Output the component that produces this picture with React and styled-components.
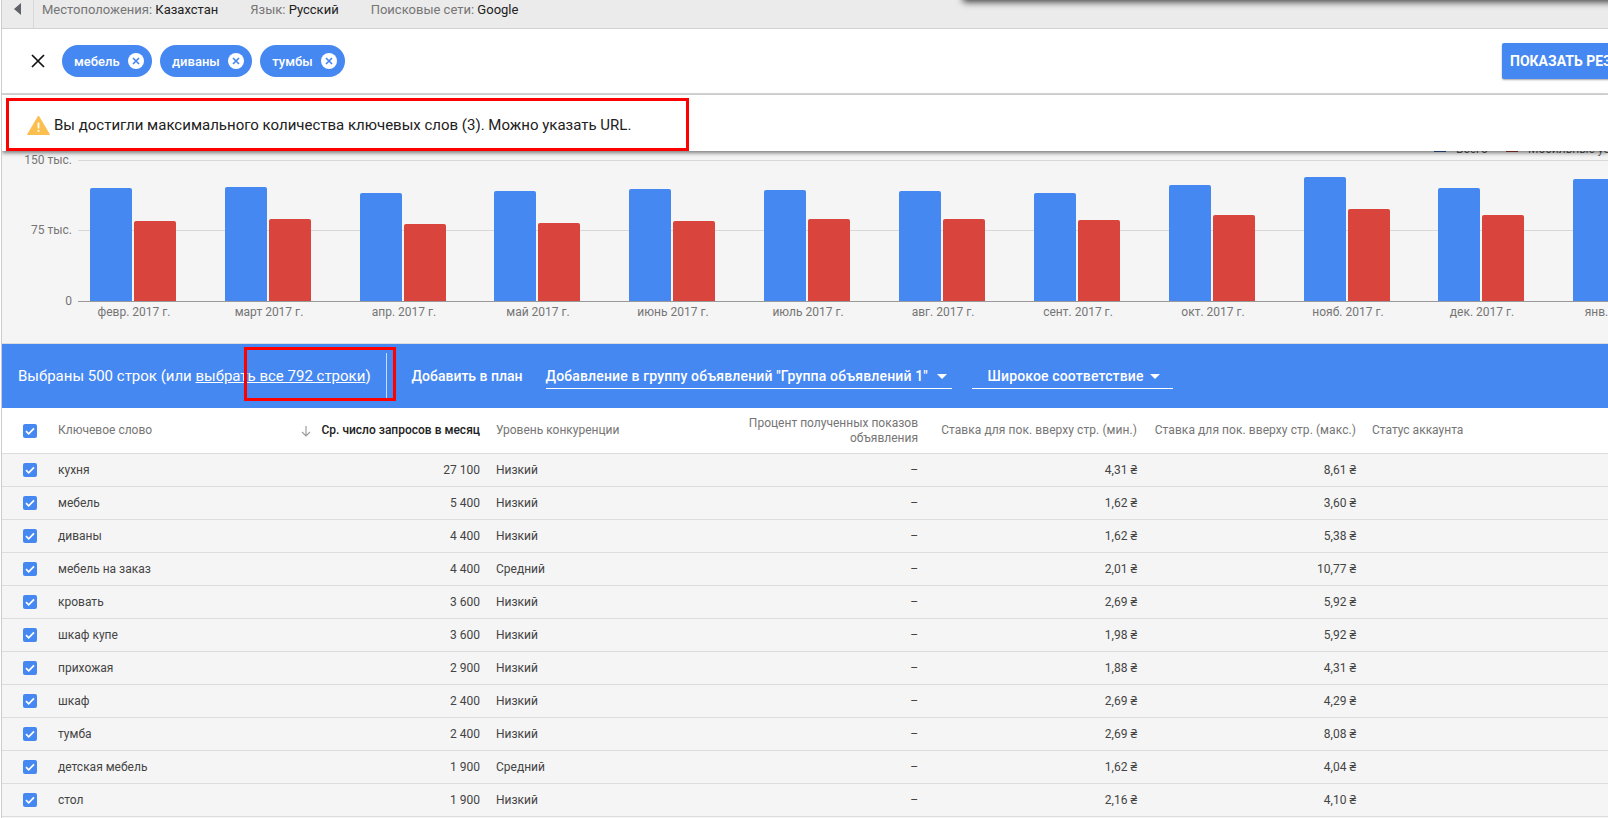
import React from 'react'
import styled, { createGlobalStyle } from 'styled-components'

const BLUE = '#4688f1'

const GlobalStyle = createGlobalStyle`
  html, body {
    margin: 0;
    padding: 0;
    background: #fff;
    font-family: Roboto, "Noto Sans", sans-serif;
    overflow: hidden;
  }
`

const Page = styled.div`
  display: flex;
  flex-direction: column;
  height: 818px;
  margin-left: 1px;
  border-left: 1px solid #ccc;
  overflow: hidden;
`

const TopBar = styled.div`
  position: relative;
  display: flex;
  flex: none;
  align-items: flex-start;
  height: 28px;
  background: #ebebeb;
  border-bottom: 1px solid #d0d0d0;
  font-size: 13px;
  line-height: 20px;
`

const TopShadow = styled.div`
  position: absolute;
  top: -10px;
  left: 961px;
  right: -20px;
  height: 10px;
  box-shadow: 0 2px 7px rgba(0, 0, 0, 0.75);
`

const BackButton = styled.div`
  display: flex;
  flex: none;
  justify-content: center;
  width: 32px;
  height: 28px;
  padding-top: 3px;
  box-sizing: border-box;
  border-right: 1px solid #d8d8d8;
`

const BackArrow = styled.div`
  width: 0;
  height: 0;
  border-top: 6px solid transparent;
  border-bottom: 6px solid transparent;
  border-right: 7px solid #5f6368;
`

const Setting = styled.div`
  margin-left: ${props => props.$gap}px;
  color: #757575;
  white-space: nowrap;
  b {
    font-weight: 400;
    color: #212121;
  }
`

const ChipBar = styled.div`
  display: flex;
  flex: none;
  align-items: center;
  gap: 8px;
  height: 64px;
  padding-left: 29px;
  background: #fff;
  border-bottom: 2px solid #d8d8d8;
`

const ClearIcon = styled.svg`
  flex: none;
  width: 14px;
  height: 14px;
  margin-right: 9px;
`

const Chip = styled.div`
  display: flex;
  flex: none;
  align-items: center;
  gap: 8px;
  height: 32px;
  padding: 0 8.5px 0 12px;
  border-radius: 16px;
  background: ${BLUE};
  color: #fff;
  font-size: 13px;
  font-weight: 500;
`

const ShowButton = styled.div`
  flex: none;
  width: 166px;
  height: 36px;
  margin-left: auto;
  margin-right: -60px;
  padding-left: 8px;
  box-sizing: border-box;
  border-radius: 2px;
  background: ${BLUE};
  box-shadow: 0 1px 2px rgba(0, 0, 0, 0.35);
  color: #fff;
  font-size: 14px;
  font-weight: 700;
  line-height: 36px;
  white-space: nowrap;
`

const AlertPanel = styled.div`
  position: relative;
  z-index: 2;
  flex: none;
  height: 56px;
  padding: 3px 0 0 4px;
  box-sizing: border-box;
  background: #fff;
  box-shadow: 0 2px 4px rgba(0, 0, 0, 0.5);
`

const AlertBox = styled.div`
  display: flex;
  align-items: center;
  gap: 4px;
  width: 683px;
  height: 53px;
  padding-left: 18px;
  box-sizing: border-box;
  border: 3px solid #f00;
  color: #212121;
  font-size: 15px;
`

const ChartSection = styled.div`
  flex: none;
  height: 193px;
  box-sizing: border-box;
  background: #f5f5f5;
  border-bottom: 1px solid #ddd;
`

const ChartSvg = styled.svg`
  display: block;
  margin-top: -11px;
  font-family: Roboto, sans-serif;
  font-size: 12px;
  fill: #757575;
`

const ActionBar = styled.div`
  position: relative;
  display: flex;
  flex: none;
  align-items: center;
  height: 64px;
  padding-left: 16px;
  background: ${BLUE};
  color: #fff;
  font-size: 15px;
  white-space: nowrap;
  a {
    color: inherit;
    text-decoration: underline;
  }
`

const Separator = styled.div`
  flex: none;
  width: 1px;
  height: 46px;
  margin: 0 25px 0 15px;
  background: rgba(255, 255, 255, 0.7);
`

const PlanLabel = styled.div`
  margin-right: 23px;
  font-size: 14px;
  font-weight: 500;
`

const Dropdown = styled.div`
  display: flex;
  flex: none;
  align-items: center;
  gap: ${props => props.$gap}px;
  width: ${props => props.$width}px;
  height: 25px;
  margin-top: 1px;
  margin-right: 20px;
  padding-left: ${props => props.$inset}px;
  box-sizing: border-box;
  border-bottom: 1px solid #fff;
  font-size: 14px;
  font-weight: 500;
  letter-spacing: 0.15px;
`

const Caret = styled.span`
  width: 0;
  height: 0;
  border-left: 5px solid transparent;
  border-right: 5px solid transparent;
  border-top: 5px solid #fff;
`

const Annotation = styled.div`
  position: absolute;
  top: 3px;
  left: 242px;
  width: 152px;
  height: 54px;
  box-sizing: border-box;
  border: 3px solid #f00;
`

const Table = styled.div`
  flex: 1;
  background: #f5f5f5;
  font-size: 12px;
`

const Row = styled.div`
  display: grid;
  grid-template-columns: 56px 200px 222px 138px 300px 219px 219px 1fr;
  align-items: center;
  height: ${props => (props.$head ? 46 : 33)}px;
  box-sizing: border-box;
  border-bottom: 1px solid #ddd;
  background: ${props => (props.$head ? '#fff' : '#f5f5f5')};
  color: ${props => (props.$head ? '#757575' : '#444')};
`

const Cell = styled.div`
  display: flex;
  justify-content: ${props => (props.$right ? 'flex-end' : 'flex-start')};
  align-items: center;
  gap: 9px;
  padding-left: ${props => props.$inset || 0}px;
  text-align: ${props => (props.$right ? 'right' : 'left')};
  line-height: 15px;
  white-space: nowrap;
`

const BidTitle = styled(Cell)`
  letter-spacing: 0.07px;
`

const SortedTitle = styled.span`
  color: #212121;
  font-weight: 500;
`

const CheckBox = styled.svg`
  display: block;
  width: 14px;
  height: 14px;
  margin-left: 21px;
`

const charts = [
  [188, 221, 'февр. 2017 г.'],
  [187, 219, 'март 2017 г.'],
  [193, 224, 'апр. 2017 г.'],
  [191, 223, 'май 2017 г.'],
  [189, 221, 'июнь 2017 г.'],
  [190, 219, 'июль 2017 г.'],
  [191, 219, 'авг. 2017 г.'],
  [193, 220, 'сент. 2017 г.'],
  [185, 215, 'окт. 2017 г.'],
  [177, 209, 'нояб. 2017 г.'],
  [188, 215, 'дек. 2017 г.'],
  [179, 212, 'янв. 2018 г.'],
]

const keywords = [
  ['кухня', '27 100', 'Низкий', '4,31 ₴', '8,61 ₴'],
  ['мебель', '5 400', 'Низкий', '1,62 ₴', '3,60 ₴'],
  ['диваны', '4 400', 'Низкий', '1,62 ₴', '5,38 ₴'],
  ['мебель на заказ', '4 400', 'Средний', '2,01 ₴', '10,77 ₴'],
  ['кровать', '3 600', 'Низкий', '2,69 ₴', '5,92 ₴'],
  ['шкаф купе', '3 600', 'Низкий', '1,98 ₴', '5,92 ₴'],
  ['прихожая', '2 900', 'Низкий', '1,88 ₴', '4,31 ₴'],
  ['шкаф', '2 400', 'Низкий', '2,69 ₴', '4,29 ₴'],
  ['тумба', '2 400', 'Низкий', '2,69 ₴', '8,08 ₴'],
  ['детская мебель', '1 900', 'Средний', '1,62 ₴', '4,04 ₴'],
  ['стол', '1 900', 'Низкий', '2,16 ₴', '4,10 ₴'],
]

const ChipClose = () => (
  <svg width="16" height="16" viewBox="0 0 16 16">
    <circle cx="8" cy="8" r="8" fill="#fff" />
    <path d="M5 5l6 6M11 5l-6 6" stroke={BLUE} strokeWidth="1.7" fill="none" />
  </svg>
)

const Checked = () => (
  <CheckBox viewBox="0 0 14 14">
    <rect width="14" height="14" rx="2" fill={BLUE} />
    <path d="M3 7.2l2.7 2.6L11 4.4" stroke="#fff" strokeWidth="1.7" fill="none" />
  </CheckBox>
)

// svg coordinates start at y = 140 of the page, x = 2
const Chart = () => (
  <ChartSvg width="1606" height="203" viewBox="2 140 1606 203">
    <path d="M78 160.5H1608M78 230.5H1608" stroke="#d8d8d8" fill="none" />
    <text x="72" y="164" textAnchor="end">150 тыс.</text>
    <text x="72" y="234" textAnchor="end">75 тыс.</text>
    <text x="72" y="305" textAnchor="end">0</text>
    <rect x="1434" y="143" width="12" height="9" fill="#2f5ca8" />
    <text x="1456" y="152.5" fill="#555">Всего</text>
    <rect x="1506" y="143" width="12" height="9" fill="#a93a30" />
    <text x="1528" y="152.5" fill="#555">Мобильные устройства</text>
    {charts.map(([blue, red, label], i) => {
      const x = Math.round(89.9 + i * 134.85)
      return (
        <g key={label}>
          <path d={`M${x} 301V${blue + 2}q0-2 2-2h38q2 0 2 2V301z`} fill={BLUE} />
          <path d={`M${x + 44} 301V${red + 2}q0-2 2-2h38q2 0 2 2V301z`} fill="#d9443d" />
          <text x={x + 44} y="316" textAnchor="middle">{label}</text>
        </g>
      )
    })}
    <path d="M78 301.5H1608" stroke="#999" fill="none" />
  </ChartSvg>
)

const App = () => (
  <>
    <GlobalStyle />
    <Page>
      <TopBar>
        <BackButton><BackArrow /></BackButton>
        <Setting $gap={8}>Местоположения: <b>Казахстан</b></Setting>
        <Setting $gap={32}>Язык: <b>Русский</b></Setting>
        <Setting $gap={32}>Поисковые сети: <b>Google</b></Setting>
        <TopShadow />
      </TopBar>

      <ChipBar>
        <ClearIcon viewBox="0 0 14 14">
          <path d="M1 1l12 12M13 1L1 13" stroke="#111" strokeWidth="1.7" fill="none" />
        </ClearIcon>
        <Chip>мебель <ChipClose /></Chip>
        <Chip>диваны <ChipClose /></Chip>
        <Chip>тумбы <ChipClose /></Chip>
        <ShowButton>ПОКАЗАТЬ РЕЗУЛЬТАТЫ</ShowButton>
      </ChipBar>

      <AlertPanel>
        <AlertBox>
          <svg width="23" height="20" viewBox="0 0 23 20">
            <path d="M11.5 1L22.5 19.5H.5z" fill="#fbbf4f" stroke="#fbbf4f" strokeLinejoin="round" />
            <rect x="10.6" y="7.5" width="1.8" height="6" fill="#fff" />
            <rect x="10.6" y="15" width="1.8" height="1.8" fill="#fff" />
          </svg>
          Вы достигли максимального количества ключевых слов (3). Можно указать URL.
        </AlertBox>
      </AlertPanel>

      <ChartSection>
        <Chart />
      </ChartSection>

      <ActionBar>
        Выбраны 500 строк (или&nbsp;<a>выбрать все 792 строки</a>)
        <Separator />
        <PlanLabel>Добавить в план</PlanLabel>
        <Dropdown $width={406} $inset={0} $gap={9}>Добавление в группу объявлений "Группа объявлений 1" <Caret /></Dropdown>
        <Dropdown $width={201} $inset={16} $gap={6}>Широкое соответствие <Caret /></Dropdown>
        <Annotation />
      </ActionBar>

      <Table>
        <Row $head>
          <Checked />
          <Cell>Ключевое слово</Cell>
          <Cell $right>
            <svg width="12" height="12" viewBox="0 0 12 12">
              <path d="M6 1v10M2 7l4 4 4-4" stroke="#9e9e9e" strokeWidth="1.2" fill="none" />
            </svg>
            <SortedTitle>Ср. число запросов в месяц</SortedTitle>
          </Cell>
          <Cell $inset={16}>Уровень конкуренции</Cell>
          <Cell $right><span>Процент полученных показов<br />объявления</span></Cell>
          <BidTitle $right>Ставка для пок. вверху стр. (мин.)</BidTitle>
          <BidTitle $right>Ставка для пок. вверху стр. (макс.)</BidTitle>
          <Cell $inset={16}>Статус аккаунта</Cell>
        </Row>
        {keywords.map(([word, count, level, min, max]) => (
          <Row key={word}>
            <Checked />
            <Cell>{word}</Cell>
            <Cell $right>{count}</Cell>
            <Cell $inset={16}>{level}</Cell>
            <Cell $right>–</Cell>
            <Cell $right>{min}</Cell>
            <Cell $right>{max}</Cell>
            <Cell />
          </Row>
        ))}
      </Table>
    </Page>
  </>
)

export default App
